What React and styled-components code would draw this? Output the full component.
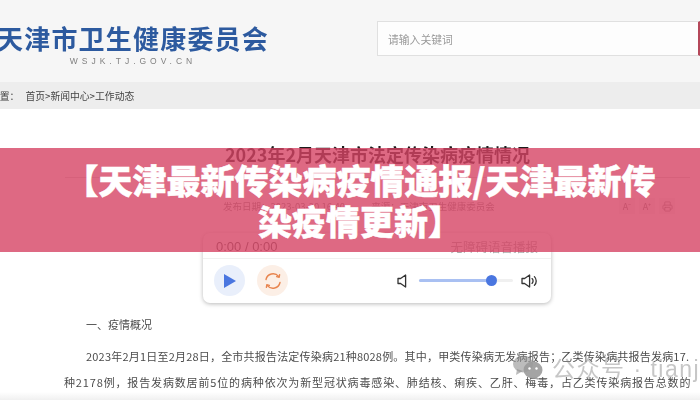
import React from 'react';
import styled, { createGlobalStyle } from 'styled-components';
import { Printer } from 'lucide-react';

const GlobalStyle = createGlobalStyle`
  html, body {
    margin: 0;
    padding: 0;
    background: #fff;
  }
  body {
    font-family: "Liberation Sans", "Noto Sans CJK SC", sans-serif;
  }
`;

const Frame = styled.div`
  position: relative;
  width: 700px;
  height: 400px;
  overflow: hidden;
`;

const Shot = styled.div`
  height: 400px;
  filter: blur(0.55px);
`;

const SiteHeader = styled.header`
  display: flex;
  justify-content: space-between;
  height: 82px;
  background: #f6f6f6;
`;

const Logo = styled.div`
  margin-left: -3px;
  padding-top: 22px;
  text-align: center;
`;

const LogoName = styled.div`
  font-family: "Noto Sans CJK SC", sans-serif;
  font-size: 26px;
  font-weight: 700;
  line-height: 31px;
  letter-spacing: 1.2px;
  white-space: nowrap;
  color: #2d5a9f;
`;

const LogoUrl = styled.div`
  margin-top: 2px;
  font-size: 8.5px;
  line-height: 12px;
  letter-spacing: 4px;
  color: #808080;
`;

const Search = styled.div`
  box-sizing: border-box;
  display: flex;
  align-items: center;
  width: 323px;
  height: 35px;
  margin-top: 21px;
  padding-left: 10px;
  background: #fdfdfd;
  border: 1px solid #e0e0e0;
  border-right: 2px solid #b5485a;
  font-family: "Noto Sans CJK SC", sans-serif;
  font-size: 10.8px;
  color: #9a9a9a;
`;

const Crumbs = styled.nav`
  display: flex;
  align-items: center;
  gap: 6px;
  height: 27px;
  margin-left: -10px;
  background: #ededed;
  font-family: "Noto Sans CJK SC", sans-serif;
  font-size: 9.8px;
  color: #444;
`;

const Article = styled.main`
  padding: 30px 10px 0 64px;
`;

const Heading = styled.h1`
  margin: 0 0 0 1px;
  padding-bottom: 8px;
  border-bottom: 1px solid #d8d8d8;
  font-family: "Noto Sans CJK SC", sans-serif;
  font-size: 18px;
  font-weight: 700;
  line-height: 30px;
  text-align: center;
  color: #1c1c1c;
`;

const MetaRow = styled.div`
  display: flex;
  align-items: center;
  height: 32px;
  margin-top: 12px;
  padding-left: 159px;
  font-family: "Noto Sans CJK SC", sans-serif;
  font-size: 9.5px;
  color: #8a8a8a;
`;

const MetaText = styled.span`
  margin-right: ${(p) => p.$gap || 0}px;
  white-space: nowrap;
`;

const Tools = styled.div`
  display: flex;
  gap: 4px;
  margin-left: auto;
  margin-right: 15px;
`;

const ToolButton = styled.div`
  display: flex;
  align-items: center;
  justify-content: center;
  width: 16px;
  height: 16px;
  background: #f2f2f2;
  font-size: 9px;
  color: #888;
`;

const Player = styled.section`
  box-sizing: border-box;
  width: 348px;
  height: 70px;
  margin: 11px 0 0 139px;
  background: #fff;
  border-radius: 7px;
  box-shadow: 0 1px 4px rgba(0, 0, 0, 0.28);
`;

const PlayerTop = styled.div`
  display: flex;
  align-items: center;
  justify-content: space-between;
  height: 26px;
  padding: 2px 13px 0;
  box-sizing: border-box;
  border-bottom: 1px solid #f0f0f0;
`;

const Clock = styled.span`
  font-size: 13px;
  color: #5a5a5a;
`;

const VoiceLabel = styled.span`
  font-family: "Noto Sans CJK SC", sans-serif;
  font-size: 12.5px;
  color: #aaa;
`;

const PlayerBottom = styled.div`
  display: flex;
  align-items: center;
  height: 43px;
  padding: 0 13px 0 11px;
`;

const RoundButton = styled.div`
  display: flex;
  align-items: center;
  justify-content: center;
  width: 31px;
  height: 31px;
  margin-right: 12px;
  border-radius: 50%;
  background: ${(p) => p.$bg};
`;

const Volume = styled.div`
  display: flex;
  align-items: center;
  margin-left: auto;
`;

const Slider = styled.div`
  position: relative;
  width: 94px;
  height: 3px;
  margin: 0 8px 0 12px;
  border-radius: 2px;
  background: #f0f0f0;
`;

const SliderFill = styled.div`
  height: 100%;
  border-radius: 2px;
  background: #a9c0f2;
`;

const SliderThumb = styled.div`
  position: absolute;
  top: -4px;
  width: 11px;
  height: 11px;
  margin-left: -5.5px;
  border-radius: 50%;
  background: #4a76e0;
`;

const Body = styled.div`
  margin-top: 8px;
  font-family: "Noto Sans CJK SC", sans-serif;
  font-size: 11px;
  line-height: 26px;
  color: #4c4c4c;
`;

const BodyLine = styled.p`
  margin: ${(p) => p.$top || 0}px 0 0 ${(p) => p.$indent || 0}px;
  letter-spacing: ${(p) => p.$spacing || 0}px;
  white-space: nowrap;
`;

const Fade = styled.div`
  position: absolute;
  left: 0;
  right: 0;
  bottom: 0;
  height: 8px;
  background: linear-gradient(rgba(240, 240, 240, 0), #f0f0f0);
`;

const Watermark = styled.div`
  position: absolute;
  left: 513px;
  top: 350px;
  display: flex;
  align-items: center;
  gap: 9px;
  font-family: "Liberation Sans", "Noto Sans CJK SC", sans-serif;
  font-size: 23px;
  letter-spacing: 1.5px;
  white-space: nowrap;
  color: rgba(120, 120, 120, 0.42);
  filter: blur(0.4px);
`;

const Banner = styled.div`
  position: absolute;
  left: 0;
  right: 0;
  top: 148px;
  height: 104px;
  display: flex;
  align-items: center;
  justify-content: center;
  background: rgba(214, 67, 100, 0.8);
`;

const BannerTitle = styled.h2`
  width: 600px;
  margin: 0 0 0 20px;
  font-family: "Noto Sans CJK SC", sans-serif;
  font-size: 34px;
  font-weight: 900;
  line-height: 41px;
  text-align: center;
  line-break: anywhere;
  color: #fff;
  -webkit-text-stroke: 0.5px #fff;
`;

const PlayIcon = () => (
  <svg width="14" height="16" viewBox="0 0 14 16">
    <path d="M1 1 L13 8 L1 15 Z" fill="#4a76e0" />
  </svg>
);

const LoopIcon = () => (
  <svg width="20" height="20" viewBox="0 0 20 20" fill="none" stroke="#e8854f" strokeWidth="1.4" strokeLinecap="round">
    <path d="M3 8.5 A7.2 7.2 0 0 1 15.6 5.4" />
    <path d="M17 11.5 A7.2 7.2 0 0 1 4.4 14.6" />
    <path d="M13.6 5.6 L16.2 6.2 L16.6 3.6" strokeLinejoin="round" />
    <path d="M6.4 14.4 L3.8 13.8 L3.4 16.4" strokeLinejoin="round" />
  </svg>
);

const SpeakerIcon = ({ waves }) => (
  <svg width={waves ? 17 : 10} height="14" viewBox={waves ? '0 0 17 14' : '0 0 10 14'} fill="none" stroke="#333" strokeWidth="1.3" strokeLinejoin="round" strokeLinecap="round">
    <path d="M1 4.5 H3.6 L8.6 1 V13 L3.6 9.5 H1 Z" />
    {waves && <path d="M11 4.6 A3.2 3.2 0 0 1 11 9.4" />}
    {waves && <path d="M13.4 2.6 A6.2 6.2 0 0 1 13.4 11.4" />}
  </svg>
);

const WechatIcon = () => (
  <svg width="30" height="26" viewBox="0 0 30 26">
    <ellipse cx="10" cy="10" rx="10" ry="8.5" fill="#8f8f8f" fillOpacity="0.6" />
    <path d="M4 15 L3 21 L10 17 Z" fill="#8f8f8f" fillOpacity="0.6" />
    <ellipse cx="20" cy="16" rx="9.5" ry="8.5" fill="#9a9a9a" fillOpacity="0.9" />
    <path d="M24 23 L26 26 L19 24 Z" fill="#9a9a9a" fillOpacity="0.9" />
    <circle cx="16.5" cy="14.5" r="1.2" fill="#fff" />
    <circle cx="23.5" cy="14.5" r="1.2" fill="#fff" />
  </svg>
);

export default function App() {
  return (
    <Frame>
      <GlobalStyle />
      <Shot>
        <SiteHeader>
          <Logo>
            <LogoName>天津市卫生健康委员会</LogoName>
            <LogoUrl>WSJK.TJ.GOV.CN</LogoUrl>
          </Logo>
          <Search>请输入关键词</Search>
        </SiteHeader>
        <Crumbs>
          <span>位置：</span>
          <span>首页&gt;新闻中心&gt;工作动态</span>
        </Crumbs>
        <Article>
          <Heading>2023年2月天津市法定传染病疫情情况</Heading>
          <MetaRow>
            <MetaText $gap={26}>发布日期：2023-03-20 16:40</MetaText>
            <MetaText>来源：天津市卫生健康委员会</MetaText>
            <Tools>
              <ToolButton>A⁻</ToolButton>
              <ToolButton>A⁺</ToolButton>
              <ToolButton><Printer size={11} strokeWidth={1.5} /></ToolButton>
            </Tools>
          </MetaRow>
          <Player>
            <PlayerTop>
              <Clock>0:00 / 0:00</Clock>
              <VoiceLabel>无障碍语音播报</VoiceLabel>
            </PlayerTop>
            <PlayerBottom>
              <RoundButton $bg="#e9effb"><PlayIcon /></RoundButton>
              <RoundButton $bg="#fcefe6"><LoopIcon /></RoundButton>
              <Volume>
                <SpeakerIcon />
                <Slider>
                  <SliderFill style={{ width: '77%' }} />
                  <SliderThumb style={{ left: '77%' }} />
                </Slider>
                <SpeakerIcon waves />
              </Volume>
            </PlayerBottom>
          </Player>
          <Body>
            <BodyLine $indent={22}>一、疫情概况</BodyLine>
            <BodyLine $indent={22} $top={6} $spacing={0.2}>2023年2月1日至2月28日，全市共报告法定传染病21种8028例。其中，甲类传染病无发病报告；乙类传染病共报告发病17.</BodyLine>
            <BodyLine $spacing={0.85}>种2178例，报告发病数居前5位的病种依次为新型冠状病毒感染、肺结核、痢疾、乙肝、梅毒，占乙类传染病报告总数的</BodyLine>
          </Body>
        </Article>
      </Shot>
      <Fade />
      <Watermark>
        <WechatIcon />
        <span>公众号 · tianji</span>
      </Watermark>
      <Banner>
        <BannerTitle>【天津最新传染病疫情通报/天津最新传染疫情更新】</BannerTitle>
      </Banner>
    </Frame>
  );
}
